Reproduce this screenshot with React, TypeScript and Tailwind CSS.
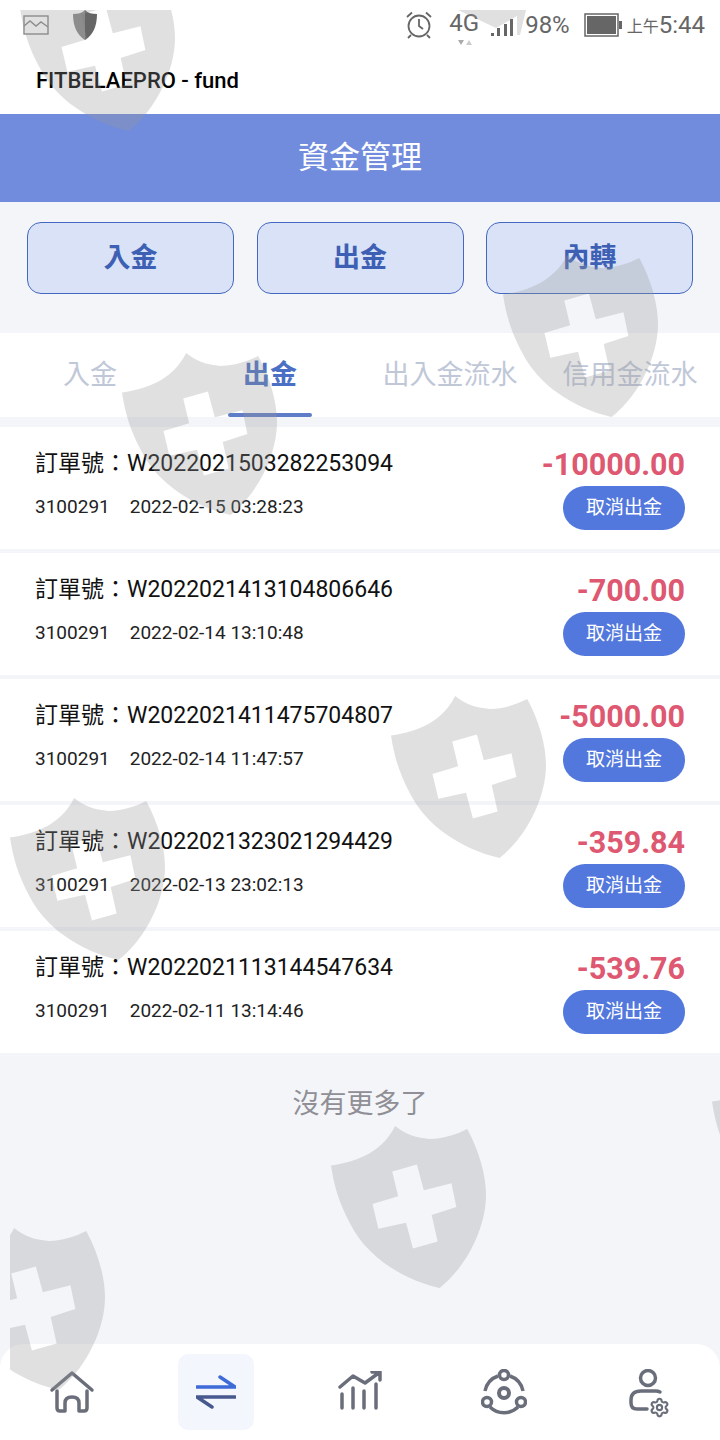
import { Settings } from "lucide-react";

const orders = [
  { no: "W2022021503282253094", time: "2022-02-15 03:28:23", amount: "-10000.00" },
  { no: "W2022021413104806646", time: "2022-02-14 13:10:48", amount: "-700.00" },
  { no: "W2022021411475704807", time: "2022-02-14 11:47:57", amount: "-5000.00" },
  { no: "W2022021323021294429", time: "2022-02-13 23:02:13", amount: "-359.84" },
  { no: "W2022021113144547634", time: "2022-02-11 13:14:46", amount: "-539.76" },
];

const font = "font-['Roboto','Noto_Sans_CJK_TC',sans-serif]";

// watermark shield, cross is a hole so the page shows through
const Shield = ({ className }: { className: string }) => (
  <svg viewBox="0 0 157 164" className={`absolute w-[155px] h-[162px] ${className}`}>
    <path
      fillRule="evenodd"
      fill="#999999"
      fillOpacity="0.3"
      d="M65 0C75 8 85 12 100 13C115 13 128 8 138 3C150 25 157 50 157 70C157 100 140 140 110 164C70 155 35 130 20 100C8 78 3 60 0 40C20 37 50 30 65 0ZM62 46L87 39L94 65L122 58L127 82L102 90L108 117L83 124L76 98L48 104L42 79L68 71Z"
    />
  </svg>
);

const StatusBar = () => (
  <div className="h-[50px] flex items-center justify-between pl-[23px] pr-[15px] text-[#666666]">
    <div className="flex items-center gap-[24px]">
      <svg width="26" height="20" viewBox="0 0 26 20" fill="none" stroke="#888888" strokeWidth="1.4">
        <rect x="1" y="1" width="24" height="18" />
        <path d="M1 11L7 6L13 11L18 7L25 12" />
      </svg>
      <svg width="24" height="30" viewBox="0 0 24 30">
        <path d="M12 0C15 3 19 4 24 4C24 16 20 25 12 30Z" fill="#666666" />
        <path d="M12 0C9 3 5 4 0 4C0 16 4 25 12 30Z" fill="#888888" />
      </svg>
    </div>
    <div className="flex items-center">
      <svg width="28" height="30" viewBox="0 0 28 30" fill="none" stroke="#666666" strokeWidth="1.8">
        <circle cx="14" cy="16" r="10.5" />
        <path d="M14 9V16L18 19M2 7L7 2.5M26 7L21 2.5M6 25L3 28M22 25L25 28" />
      </svg>
      <span className="relative ml-[16px] text-[24px] leading-none -mt-[4px]">
        4G
        <svg width="14" height="6" viewBox="0 0 14 6" className="absolute left-[9px] bottom-[-11px]">
          <path d="M0 0H6L3 5Z" fill="#aaaaaa" />
          <path d="M8 5H14L11 0Z" fill="#cccccc" />
        </svg>
      </span>
      <svg width="26" height="20" viewBox="0 0 26 20" fill="#666666" className="ml-[10px] mt-[3px]">
        <rect x="2" y="16" width="3" height="3" />
        <rect x="8" y="11" width="3" height="8" />
        <rect x="15" y="7" width="3" height="12" />
        <rect x="21" y="2" width="3" height="17" />
      </svg>
      <span className="ml-[10px] text-[24px] leading-none">98%</span>
      <svg width="38" height="24" viewBox="0 0 38 24" className="ml-[14px]">
        <rect x="1" y="1" width="33" height="22" fill="#ffffff" stroke="#666666" strokeWidth="1.5" />
        <rect x="3" y="3" width="29" height="18" fill="#666666" />
        <rect x="35" y="8" width="3" height="8" fill="#666666" />
      </svg>
      <span className="ml-[5px] text-[16px] leading-none mt-[3px]">上午</span>
      <span className="text-[24px] leading-none">5:44</span>
    </div>
  </div>
);

const BottomNav = () => (
  <div className="mt-auto h-[96px] bg-white rounded-t-[24px] grid grid-cols-5 items-center">
    <div className="flex justify-center">
      <svg width="46" height="44" viewBox="0 0 46 44" fill="none" stroke="#6a6e7a" strokeWidth="3.5" strokeLinecap="round" strokeLinejoin="round">
        <path d="M3 20L23 3L43 20" />
        <path d="M8 21V38Q8 41 11 41H16V33Q16 27 23 27Q30 27 30 33V41H35Q38 41 38 38V21" />
      </svg>
    </div>
    <div className="flex justify-center">
      <div className="w-[76px] h-[76px] rounded-[10px] bg-[#f3f6fd] flex items-center justify-center">
        <svg width="40" height="34" viewBox="0 0 40 34" fill="none" strokeWidth="3.5" strokeLinecap="round">
          <path d="M1 12H39L24 2" stroke="#3f6bd8" />
          <path d="M39 22H1L16 32" stroke="#47598f" />
        </svg>
      </div>
    </div>
    <div className="flex justify-center">
      <svg width="44" height="42" viewBox="0 0 44 42" fill="none" stroke="#6a6e7a" strokeWidth="3.5" strokeLinecap="round" strokeLinejoin="round">
        <path d="M4 23V37M15 17V37M26 20V37M38 13V37" />
        <path d="M2 16L15 5L27 12L42 1M34 1H42V9" />
      </svg>
    </div>
    <div className="flex justify-center">
      <svg width="46" height="46" viewBox="0 0 46 46" fill="none" stroke="#6a6e7a" strokeWidth="3.5">
        <path d="M17 7A20 20 0 0 0 4 22M29 7A20 20 0 0 1 42 22M9 38A20 20 0 0 0 37 38" />
        <circle cx="23" cy="6" r="4.5" />
        <circle cx="6" cy="33" r="4.5" />
        <circle cx="40" cy="33" r="4.5" />
        <circle cx="23" cy="24" r="5" strokeWidth="4" />
      </svg>
    </div>
    <div className="flex justify-center">
      <div className="relative w-[42px] h-[46px]">
        <svg width="34" height="44" viewBox="0 0 34 44" fill="none" stroke="#6a6e7a" strokeWidth="3.5" strokeLinecap="round" className="ml-[2px]">
          <circle cx="19" cy="9" r="7.5" />
          <path d="M31 23Q29 22 27 22H12Q2 22 2 31V34Q2 40 8 40H18" />
        </svg>
        <Settings size={21} strokeWidth={2.4} className="absolute right-[-1px] bottom-[-3px] text-[#6a6e7a]" />
      </div>
    </div>
  </div>
);

export default function App() {
  return (
    <div className={`relative w-[720px] h-[1440px] overflow-hidden bg-[#f4f5f9] flex flex-col ${font}`}>
      <div className="bg-white h-[114px]">
        <StatusBar />
        <div className="pl-[36px] pt-[15px] text-[22px] leading-[32px] font-medium text-black">FITBELAEPRO - fund</div>
      </div>

      <div className="h-[88px] bg-[#718cdd] flex items-center justify-center text-[31px] text-white">資金管理</div>

      <div className="flex justify-between px-[27px] pt-[20px]">
        {["入金", "出金", "內轉"].map((t) => (
          <div
            key={t}
            className="w-[207px] h-[72px] rounded-[14px] border border-[#4468c0] bg-[#d9e2f6] flex items-center justify-center text-[27px] font-bold text-[#3d5fb4]"
          >
            {t}
          </div>
        ))}
      </div>

      <div className="mt-[39px] h-[84px] bg-white grid grid-cols-4 text-[27px] text-[#c0c8d8]">
        <div className="flex items-center justify-center">入金</div>
        <div className="relative flex items-center justify-center font-bold text-[#4a6fc4]">
          出金
          <div className="absolute bottom-0 left-[48px] w-[84px] h-[4px] rounded-full bg-[#5f7cc8]" />
        </div>
        <div className="flex items-center justify-center">出入金流水</div>
        <div className="flex items-center justify-center">信用金流水</div>
      </div>

      <div className="mt-[10px] flex flex-col gap-[4px]">
        {orders.map((o) => (
          <div key={o.no} className="h-[122px] bg-white px-[35px] flex justify-between">
            <div className="pt-[20px]">
              <div className="text-[23px] leading-[34px] text-[#111111]">訂單號：{o.no}</div>
              <div className="mt-[13px] text-[19px] leading-[26px] text-[#222222] flex gap-[20px]">
                <span>3100291</span>
                <span>{o.time}</span>
              </div>
            </div>
            <div className="pt-[19px] flex flex-col items-end">
              <div className="text-[30.5px] leading-[38px] font-bold text-[#dd5870]">{o.amount}</div>
              <div className="mt-[2px] w-[122px] h-[44px] rounded-full bg-[#5378dd] flex items-center justify-center text-[19px] text-white">
                取消出金
              </div>
            </div>
          </div>
        ))}
      </div>

      <div className="mt-[32px] text-center text-[27px] leading-[38px] text-[#8f8f95]">沒有更多了</div>

      <BottomNav />

      {/* watermark layer, clipped 10px in from top and left */}
      <div className="absolute top-[10px] left-[10px] right-0 bottom-0 overflow-hidden pointer-events-none">
        <Shield className="left-[10px] top-[-41px]" />
        <Shield className="left-[112px] top-[343px]" />
        <Shield className="left-[493px] top-[245px]" />
        <Shield className="left-[381px] top-[686px]" />
        <Shield className="left-[0px] top-[788px]" />
        <Shield className="left-[321px] top-[1116px]" />
        <Shield className="left-[-60px] top-[1218px]" />
        <Shield className="left-[702px] top-[1052px]" />
        <svg width="70" height="26" viewBox="0 0 70 26" className="absolute left-[448px] top-0">
          <path d="M0 0H68L62 25H59V6L38 18Z" fill="#999999" fillOpacity="0.3" />
        </svg>
      </div>
    </div>
  );
}
